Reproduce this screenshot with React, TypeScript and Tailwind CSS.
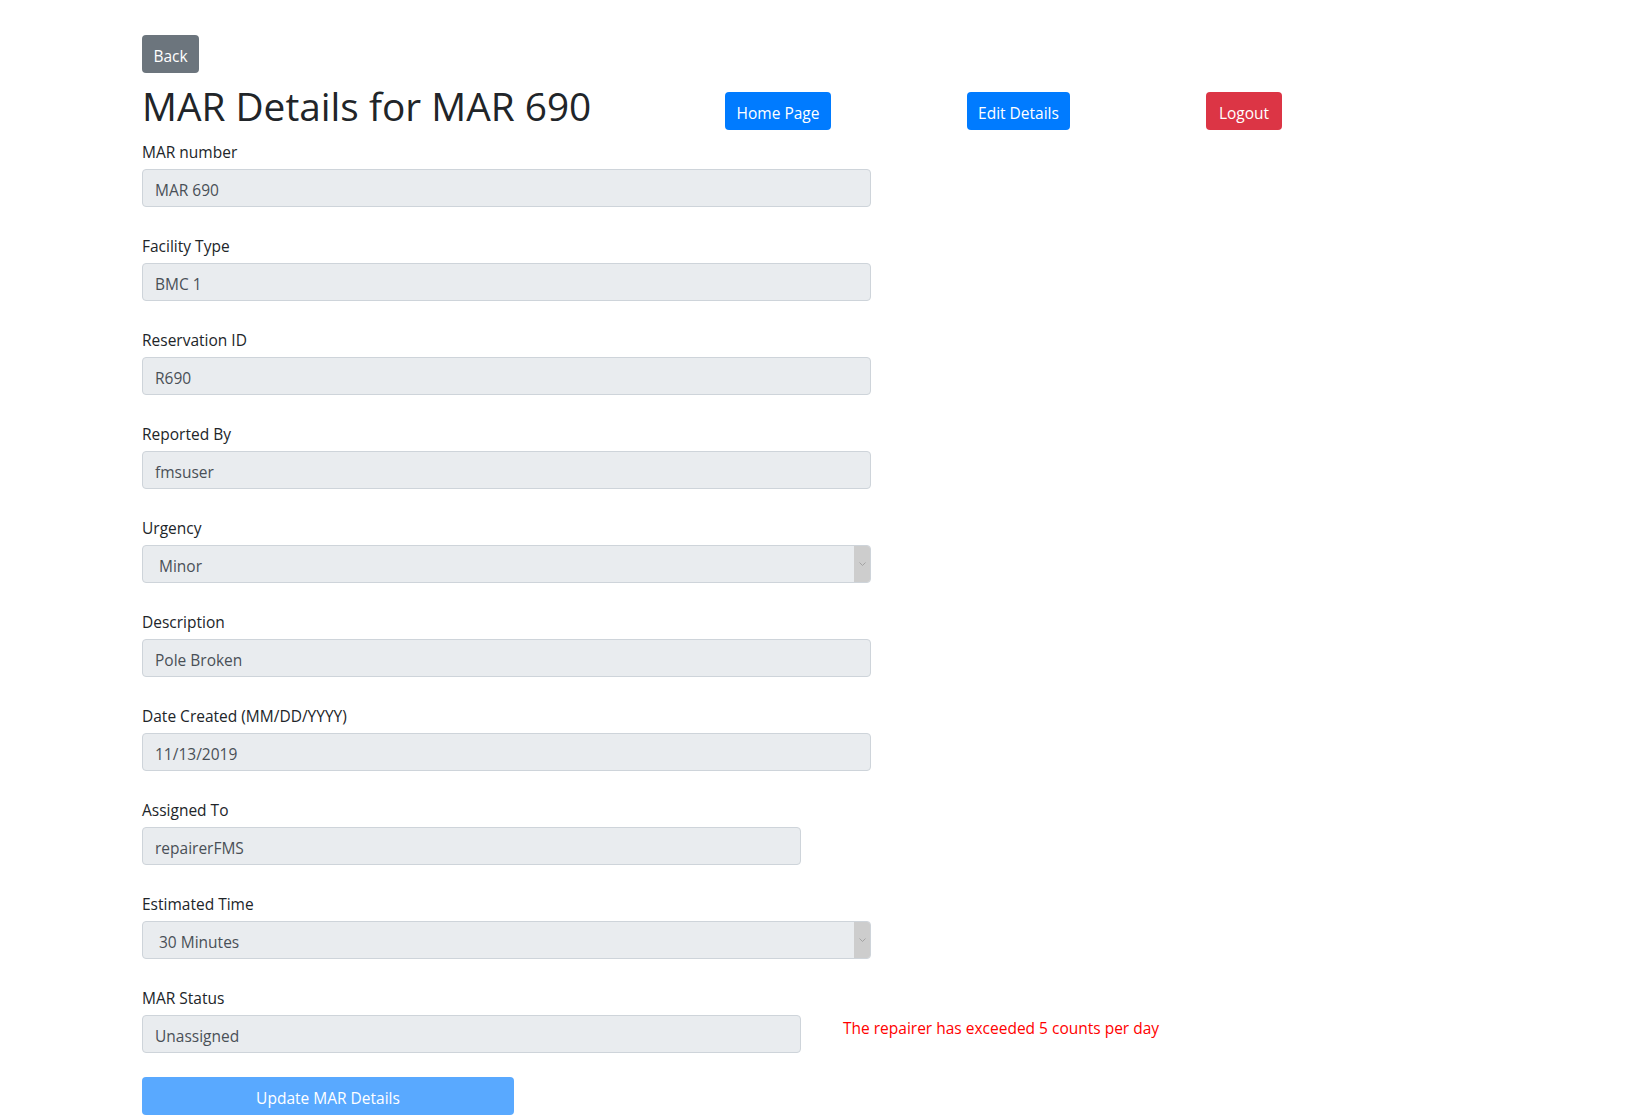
import React from "react";

type Field = {
  label: string;
  value: string;
  kind?: "input" | "select";
  narrow?: boolean;
  note?: string;
};

const fields: Field[] = [
  { label: "MAR number", value: "MAR 690" },
  { label: "Facility Type", value: "BMC 1" },
  { label: "Reservation ID", value: "R690" },
  { label: "Reported By", value: "fmsuser" },
  { label: "Urgency", value: "Minor", kind: "select" },
  { label: "Description", value: "Pole Broken" },
  { label: "Date Created (MM/DD/YYYY)", value: "11/13/2019" },
  { label: "Assigned To", value: "repairerFMS", narrow: true },
  { label: "Estimated Time", value: "30 Minutes", kind: "select" },
  {
    label: "MAR Status",
    value: "Unassigned",
    narrow: true,
    note: "The repairer has exceeded 5 counts per day",
  },
];

function ReadonlyInput({ value, narrow }: { value: string; narrow?: boolean }) {
  return (
    <div
      className={`flex h-[38px] items-center rounded-[4px] border border-[#ced4da] bg-[#e9ecef] px-3 pt-[5px] text-[#495057] ${
        narrow ? "w-[659px]" : "w-[729px]"
      }`}
    >
      {value}
    </div>
  );
}

function DisabledSelect({ value }: { value: string }) {
  return (
    <div className="flex h-[38px] w-[729px] overflow-hidden rounded-[4px] border border-[#ced4da] bg-[#e9ecef] text-[#495057]">
      <div className="flex flex-1 items-center pl-4 pt-[5px]">{value}</div>
      <div className="flex w-[16px] items-center justify-center bg-[#cdcdcd]">
        <svg width="7" height="4" viewBox="0 0 7 4" fill="none">
          <path d="M0.5 0.5 L3.5 3.5 L6.5 0.5" stroke="#a3a3a3" strokeWidth="1" />
        </svg>
      </div>
    </div>
  );
}

export default function App() {
  return (
    <div className="min-h-screen bg-white pl-[142px] pt-[35px] font-['Open_Sans','Liberation_Sans',sans-serif] text-[15.5px] text-[#212529]">
      <button className="h-[38px] w-[57px] rounded-[4px] bg-[#6c757d] pt-[3px] text-white leading-6">
        Back
      </button>

      <div className="mt-[9px] mb-[9px] flex h-[48px] items-start">
        <h1 className="w-[583px] text-[38.8px] font-normal leading-[48px]">
          MAR Details for MAR 690
        </h1>
        <button className="mt-[10px] h-[38px] w-[106px] rounded-[4px] bg-[#007bff] pt-[3px] text-white leading-6">
          Home Page
        </button>
        <button className="mt-[10px] ml-[136px] h-[38px] w-[103px] rounded-[4px] bg-[#007bff] pt-[3px] text-white leading-6">
          Edit Details
        </button>
        <button className="mt-[10px] ml-[136px] h-[38px] w-[76px] rounded-[4px] bg-[#dc3545] pt-[3px] text-white leading-6">
          Logout
        </button>
      </div>

      <form className="flex flex-col gap-[26px]">
        {fields.map((f) => (
          <div key={f.label}>
            <label className="mb-[6px] block h-6 pt-px leading-6">{f.label}</label>
            <div className="flex items-start">
              {f.kind === "select" ? (
                <DisabledSelect value={f.value} />
              ) : (
                <ReadonlyInput value={f.value} narrow={f.narrow} />
              )}
              {f.note && (
                <span className="ml-[42px] pt-px leading-6 text-[#ff0000]">{f.note}</span>
              )}
            </div>
          </div>
        ))}
      </form>

      <button
        disabled
        className="mt-6 h-[38px] w-[372px] rounded-[4px] bg-[#59a9ff] pt-[4px] text-white leading-6"
      >
        Update MAR Details
      </button>
    </div>
  );
}
